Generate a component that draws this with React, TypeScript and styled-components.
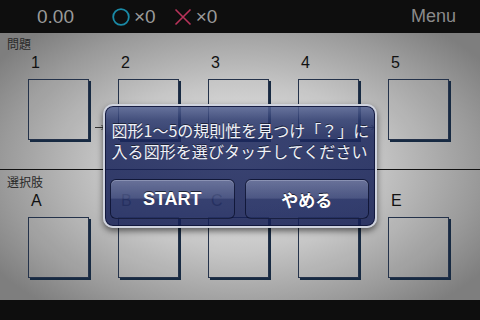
import React from "react";
import styled, { createGlobalStyle } from "styled-components";

const Global = createGlobalStyle`
  html, body { margin: 0; padding: 0; background: #0e0e0e; }
  body { font-family: "Liberation Sans", "Noto Sans CJK JP", sans-serif; }
  * { box-sizing: border-box; }
`;

const Screen = styled.div`
  width: 480px;
  height: 320px;
  display: flex;
  flex-direction: column;
  overflow: hidden;
  background: #0e0e0e;
`;

const TopBar = styled.div`
  height: 33px;
  flex: none;
  display: flex;
  align-items: center;
  padding: 0 24px 0 37px;
  background: #0e0e0e;
  color: #9a9a9a;
`;

const Time = styled.div`
  font-size: 19px;
  width: 75px;
`;

const Score = styled.div`
  display: flex;
  align-items: center;
  font-size: 19px;
  margin-right: 18px;
`;

const ScoreIcon = styled.svg`
  display: block;
  margin-right: 4px;
`;

const Menu = styled.div`
  margin-left: auto;
  font-size: 18px;
  color: #8a8a8a;
`;

const Panel = styled.div`
  position: relative;
  height: 267px;
  flex: none;
  background: radial-gradient(
    ellipse 62% 68% at 50% 50%,
    #efefef 0%,
    #c6c6c6 45%,
    #9a9a9a 80%,
    #7e7e7e 100%
  );
`;

const Section = styled.div<{ $top: number; $divider?: boolean }>`
  height: ${(p) => (p.$divider ? 137 : 130)}px;
  padding-top: ${(p) => p.$top}px;
  border-bottom: ${(p) => (p.$divider ? "1px solid #111" : "none")};
`;

const SectionLabel = styled.div`
  font-family: "Noto Sans CJK JP", sans-serif;
  font-size: 12px;
  line-height: 16px;
  color: #2a2a2a;
  padding-left: 7px;
`;

const Row = styled.div<{ $gap: number }>`
  display: flex;
  padding-left: 28px;
  margin-top: 2px;
  gap: ${(p) => p.$gap}px;
`;

const Item = styled.div`
  width: 61px;
  display: flex;
  flex-direction: column;
`;

const ItemLabel = styled.div`
  font-size: 16px;
  line-height: 18px;
  color: #111;
  padding-left: 3px;
  margin-bottom: 7px;
`;

const Box = styled.div`
  width: 61px;
  height: 61px;
  border: 1px solid #24324a;
  box-shadow: 2px 2px 0 #172a42;
  background: rgba(255, 255, 255, 0.05);
`;

const Connector = styled.div`
  width: 29px;
  padding: 63px 0 0 6px;
`;

const Dialog = styled.div`
  position: absolute;
  left: 103px;
  top: 71px;
  width: 274px;
  height: 124px;
  border-radius: 10px;
  border: 2px solid #cfd3de;
  padding: 14px 6px 0 5px;
  background: linear-gradient(
    180deg,
    rgba(88, 102, 150, 0.86) 0px,
    rgba(46, 60, 112, 0.86) 14px,
    rgba(28, 40, 94, 0.86) 30px,
    rgba(22, 32, 86, 0.86) 100%
  );
  box-shadow: inset 0 0 0 1px rgba(14, 20, 56, 0.9), 0 3px 6px rgba(0, 0, 0, 0.55);
  display: flex;
  flex-direction: column;
`;

const Message = styled.div`
  width: 256px;
  margin: 0 auto 17px;
  font-family: "Noto Sans CJK JP", sans-serif;
  font-size: 16px;
  line-height: 21px;
  color: #f0f2f8;
  text-shadow: 0 -1px 0 rgba(0, 0, 0, 0.5);
`;

const MessageLine = styled.div`
  text-align: justify;
  text-align-last: justify;
  white-space: nowrap;
`;

const Buttons = styled.div`
  display: grid;
  grid-template-columns: 1fr 1fr;
  gap: 10px;
`;

const Button = styled.div<{ $cjk?: boolean }>`
  height: 40px;
  border-radius: 6px;
  border: 1px solid rgba(12, 18, 48, 0.85);
  background: linear-gradient(
    180deg,
    rgba(150, 158, 192, 0.55) 0%,
    rgba(100, 112, 155, 0.5) 48%,
    rgba(58, 70, 120, 0.45) 50%,
    rgba(52, 64, 114, 0.45) 100%
  );
  box-shadow: inset 0 1px 0 rgba(200, 206, 230, 0.35);
  display: flex;
  align-items: center;
  justify-content: center;
  color: #ffffff;
  font-weight: bold;
  font-family: ${(p) =>
    p.$cjk ? `"Noto Sans CJK JP", sans-serif` : `"Liberation Sans", sans-serif`};
  font-size: ${(p) => (p.$cjk ? 17 : 18)}px;
  text-shadow: 0 -1px 0 rgba(0, 0, 0, 0.6);
`;

const BottomBar = styled.div`
  flex: 1;
  background: #0e0e0e;
`;

const Arrow = () => (
  <svg width="10" height="7" viewBox="0 0 10 7">
    <path d="M0 3.5 H9 M6.5 1 L9 3.5 L6.5 6" stroke="#333" strokeWidth="1" fill="none" />
  </svg>
);

const problems = ["1", "2", "3", "4", "5"];
const choices = ["A", "B", "C", "D", "E"];

export default function App() {
  return (
    <Screen>
      <Global />
      <TopBar>
        <Time>0.00</Time>
        <Score>
          <ScoreIcon width="18" height="18" viewBox="0 0 18 18">
            <circle cx="9" cy="9" r="7.8" stroke="#1a8aa6" strokeWidth="1.8" fill="none" />
          </ScoreIcon>
          ×0
        </Score>
        <Score>
          <ScoreIcon width="18" height="18" viewBox="0 0 18 18">
            <path d="M1.5 1.5 L16.5 16.5 M16.5 1.5 L1.5 16.5" stroke="#b8335a" strokeWidth="1.6" />
          </ScoreIcon>
          ×0
        </Score>
        <Menu>Menu</Menu>
      </TopBar>
      <Panel>
        <Section $top={3} $divider>
          <SectionLabel>問題</SectionLabel>
          <Row $gap={0}>
            {problems.map((p, i) => (
              <React.Fragment key={p}>
                <Item>
                  <ItemLabel>{p}</ItemLabel>
                  <Box />
                </Item>
                {i < problems.length - 1 && (
                  <Connector>
                    <Arrow />
                  </Connector>
                )}
              </React.Fragment>
            ))}
          </Row>
        </Section>
        <Section $top={4}>
          <SectionLabel>選択肢</SectionLabel>
          <Row $gap={29}>
            {choices.map((c) => (
              <Item key={c}>
                <ItemLabel>{c}</ItemLabel>
                <Box />
              </Item>
            ))}
          </Row>
        </Section>
        <Dialog>
          <Message>
            <MessageLine>図形1〜5の規則性を見つけ「？」に</MessageLine>
            <MessageLine>入る図形を選びタッチしてください</MessageLine>
          </Message>
          <Buttons>
            <Button>START</Button>
            <Button $cjk>やめる</Button>
          </Buttons>
        </Dialog>
      </Panel>
      <BottomBar />
    </Screen>
  );
}
